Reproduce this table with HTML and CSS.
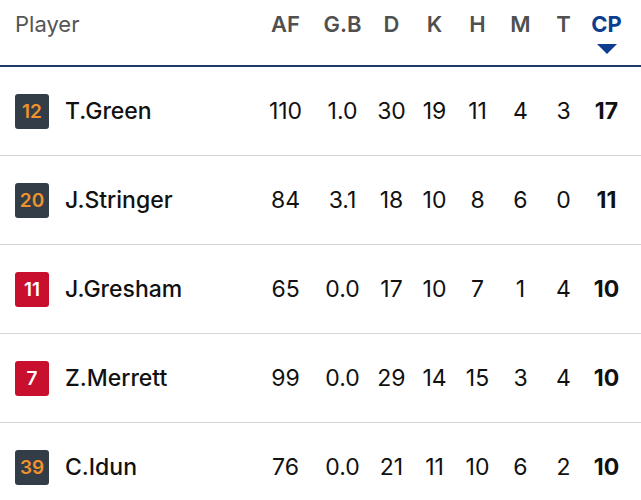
FILE: index.html
```html
<!DOCTYPE html>
<html>
<head>
<meta charset="utf-8">
<link rel="stylesheet" href="styles.css">
</head>
<body>
<div class="table">
  <div class="row head">
    <div class="player-h">Player</div>
    <div class="c af">AF</div>
    <div class="c gb">G.B</div>
    <div class="c">D</div>
    <div class="c">K</div>
    <div class="c">H</div>
    <div class="c">M</div>
    <div class="c">T</div>
    <div class="c cp">CP<span class="arrow"></span></div>
  </div>
  <div class="row">
    <div class="player"><span class="badge dark">12</span><span class="name">T.Green</span></div>
    <div class="c">110</div><div class="c">1.0</div><div class="c">30</div><div class="c">19</div><div class="c">11</div><div class="c">4</div><div class="c">3</div><div class="c b">17</div>
  </div>
  <div class="row">
    <div class="player"><span class="badge dark">20</span><span class="name">J.Stringer</span></div>
    <div class="c">84</div><div class="c">3.1</div><div class="c">18</div><div class="c">10</div><div class="c">8</div><div class="c">6</div><div class="c">0</div><div class="c b">11</div>
  </div>
  <div class="row">
    <div class="player"><span class="badge red">11</span><span class="name">J.Gresham</span></div>
    <div class="c">65</div><div class="c">0.0</div><div class="c">17</div><div class="c">10</div><div class="c">7</div><div class="c">1</div><div class="c">4</div><div class="c b">10</div>
  </div>
  <div class="row">
    <div class="player"><span class="badge red">7</span><span class="name">Z.Merrett</span></div>
    <div class="c">99</div><div class="c">0.0</div><div class="c">29</div><div class="c">14</div><div class="c">15</div><div class="c">3</div><div class="c">4</div><div class="c b">10</div>
  </div>
  <div class="row">
    <div class="player"><span class="badge dark">39</span><span class="name">C.Idun</span></div>
    <div class="c">76</div><div class="c">0.0</div><div class="c">21</div><div class="c">11</div><div class="c">10</div><div class="c">6</div><div class="c">2</div><div class="c b">10</div>
  </div>
</div>
</body>
</html>
```
FILE: styles.css
```css
html, body { margin: 0; padding: 0; background: #fff; }
body { font-family: Inter, "Noto Sans", sans-serif; color: #111; overflow: hidden; }
.table { width: 641px; }
.row {
  display: grid;
  grid-template-columns: 1fr 59px 55px 43px 43px 43px 43px 43px 43px;
  padding-right: 13px;
  height: 88px;
  align-items: center;
  border-bottom: 1px solid #d6d6d6;
}
.row.head {
  height: 65px;
  border-bottom: 2px solid #1d3b6a;
  align-items: start;
  color: #555;
}
.player-h { padding: 11px 0 0 15px; font-size: 22px; font-weight: 400; }
.head .c { padding-top: 11px; font-size: 22px; font-weight: 600; color: #505050; }
.head .cp { color: #0d3d8f; font-weight: 700; }
.arrow {
  display: block;
  width: 0; height: 0;
  margin: 7px auto 0;
  border-left: 10.5px solid transparent;
  border-right: 10.5px solid transparent;
  border-top: 10px solid #0d3d8f;
}
.c { text-align: center; font-size: 23px; }
.b { font-weight: 700; }
.player { display: flex; align-items: center; padding-left: 15px; }
.badge {
  width: 34px; height: 35px;
  border-radius: 3px;
  display: flex; align-items: center; justify-content: center;
  font-size: 19px; font-weight: 600;
  margin-right: 16px;
}
.badge.dark { background: #333d47; color: #f0922b; }
.badge.red { background: #c8102e; color: #fff; }
.name { font-size: 23px; font-weight: 500; }
```
